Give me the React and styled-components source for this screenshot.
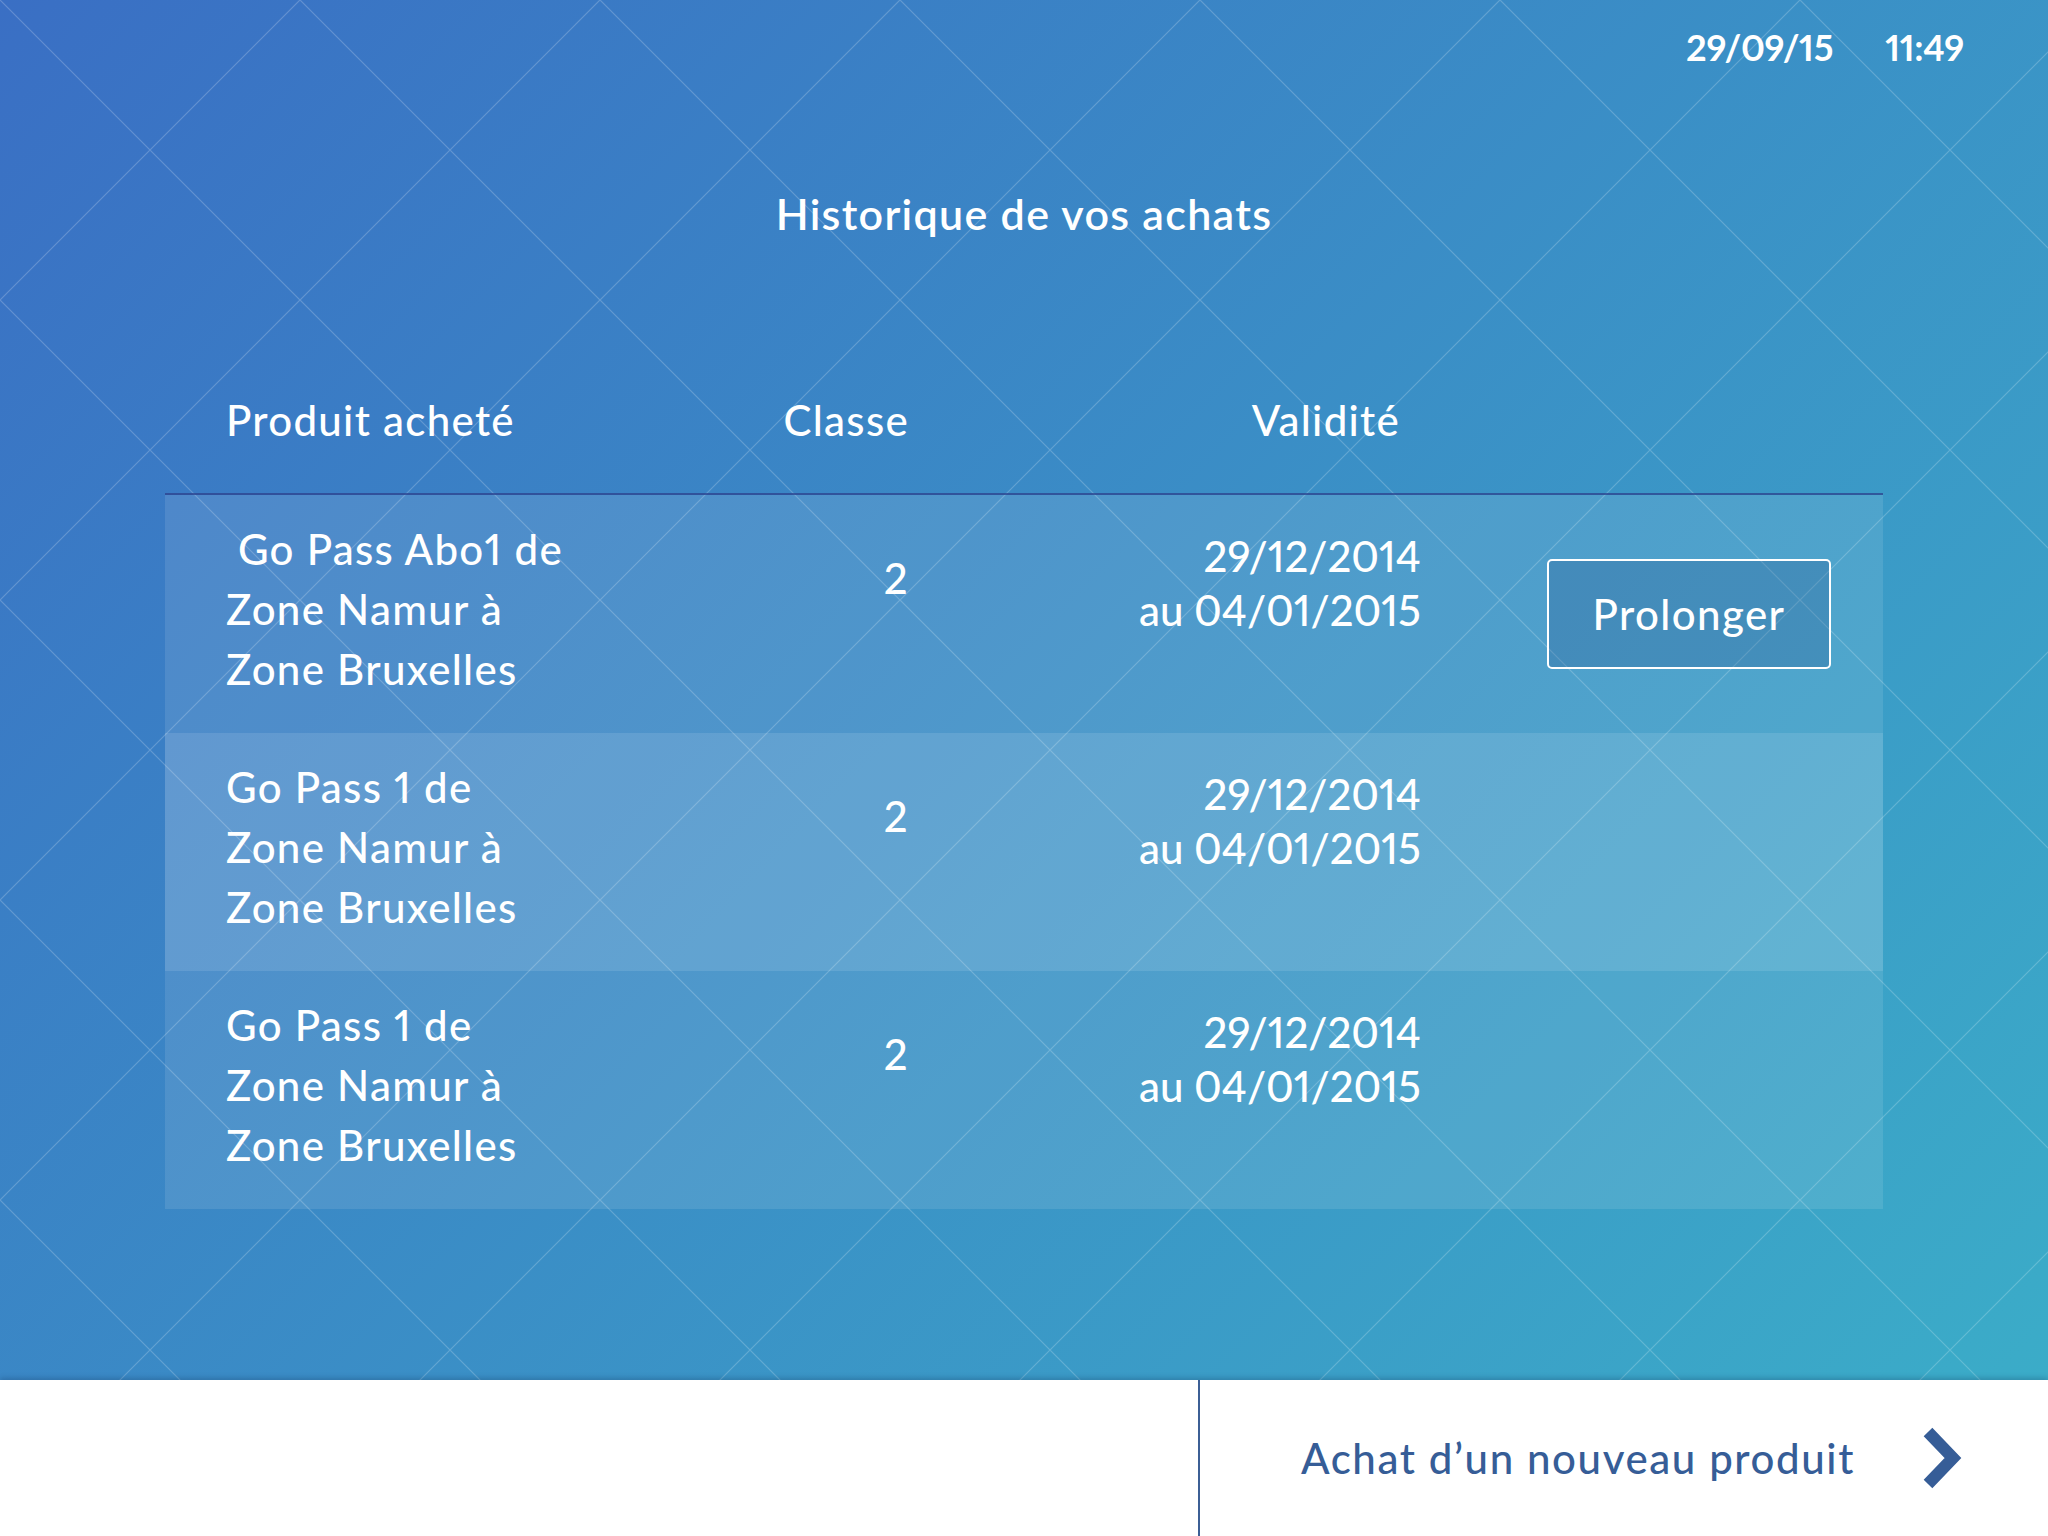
import React from "react";
import styled, { createGlobalStyle } from "styled-components";

const GlobalStyle = createGlobalStyle`
  html, body {
    margin: 0;
    padding: 0;
  }
  body {
    font-family: Lato, "Open Sans", sans-serif;
    color: #fff;
    font-variant-numeric: proportional-nums;
  }
`;

const Screen = styled.div`
  width: 2048px;
  height: 1536px;
  display: flex;
  flex-direction: column;
  overflow: hidden;
`;

const Stage = styled.main`
  position: relative;
  flex: 1;
  background: linear-gradient(134deg, #3a6fc4 0%, #3bacc8 100%);
`;

const Lattice = styled.svg`
  position: absolute;
  inset: 0;
  width: 100%;
  height: 100%;
  pointer-events: none;
`;

const Content = styled.div`
  position: relative;
  z-index: 1;
  display: flex;
  flex-direction: column;
`;

const TopBar = styled.div`
  display: flex;
  justify-content: flex-end;
  gap: 52px;
  padding: 22px 84px 0 0;
  font-size: 36px;
  font-weight: 700;
  line-height: 50px;
  letter-spacing: -0.3px;
`;

const Title = styled.h1`
  margin: 112px 0 0;
  font-size: 43px;
  font-weight: 600;
  line-height: 60px;
  letter-spacing: 1.3px;
  text-align: center;
`;

const Table = styled.section`
  margin: 146px 165px 0;
`;

const columns = "595px 149px 512px 1fr";

const HeaderRow = styled.div`
  display: grid;
  grid-template-columns: ${columns};
  padding-bottom: 43px;
  border-bottom: 2px solid rgba(45, 65, 140, 0.75);
  font-size: 42px;
  font-weight: 500;
  line-height: 60px;
  letter-spacing: 1.3px;
`;

const HeadCell = styled.div`
  text-align: ${(p) => p.$align || "left"};
  padding-left: ${(p) => p.$left || 0}px;
  padding-right: ${(p) => p.$right || 0}px;
`;

const Row = styled.div`
  display: grid;
  grid-template-columns: ${columns};
  height: 238px;
  background: rgba(255, 255, 255, ${(p) => p.$alpha});
  font-size: 42px;
  font-weight: 500;
  letter-spacing: 1.3px;
`;

const ProductCell = styled.div`
  padding: 24px 0 0 61px;
  line-height: 60px;
`;

const ClassCell = styled.div`
  padding-top: 53px;
  text-align: right;
  line-height: 60px;
`;

const DateCell = styled.div`
  padding-top: 34px;
  text-align: right;
  line-height: 54px;
  letter-spacing: 0;
`;

const ActionCell = styled.div`
  display: flex;
  justify-content: flex-end;
  align-items: flex-start;
  padding: 64px 52px 0 0;
`;

const ExtendButton = styled.button`
  box-sizing: border-box;
  width: 284px;
  height: 110px;
  border: 2px solid #fff;
  border-radius: 5px;
  background: rgba(40, 80, 140, 0.26);
  color: #fff;
  font-family: inherit;
  font-size: 42px;
  font-weight: 500;
  letter-spacing: 1.4px;
  cursor: pointer;
`;

const Footer = styled.footer`
  position: relative;
  z-index: 2;
  height: 156px;
  flex-shrink: 0;
  display: grid;
  grid-template-columns: 1200px 1fr;
  background: #fff;
  box-shadow: 0 -2px 5px rgba(10, 40, 80, 0.25);
`;

const FooterSpacer = styled.div`
  border-right: 2px solid #3c5f95;
`;

const NewPurchase = styled.a`
  display: flex;
  align-items: center;
  gap: 68px;
  padding-left: 101px;
  color: #365d97;
  font-size: 42px;
  font-weight: 500;
  letter-spacing: 1.6px;
  text-decoration: none;
  cursor: pointer;
`;

const purchases = [
  {
    lines: ["\u00a0Go Pass Abo1 de", "Zone Namur à", "Zone Bruxelles"],
    classe: "2",
    from: "29/12/2014",
    to: "au 04/01/2015",
    canExtend: true,
    alpha: 0.1,
  },
  {
    lines: ["Go Pass 1 de", "Zone Namur à", "Zone Bruxelles"],
    classe: "2",
    from: "29/12/2014",
    to: "au 04/01/2015",
    canExtend: false,
    alpha: 0.2,
  },
  {
    lines: ["Go Pass 1 de", "Zone Namur à", "Zone Bruxelles"],
    classe: "2",
    from: "29/12/2014",
    to: "au 04/01/2015",
    canExtend: false,
    alpha: 0.1,
  },
];

const Chevron = () => (
  <svg width="40" height="62" viewBox="0 0 40 62">
    <polyline
      points="5,5 30,31 5,57"
      fill="none"
      stroke="#365d97"
      strokeWidth="12"
      strokeLinecap="butt"
      strokeLinejoin="miter"
    />
  </svg>
);

const App = () => {
  return (
    <Screen>
      <GlobalStyle />
      <Stage>
        <Lattice>
          <defs>
            <pattern id="diamonds" width="300" height="300" patternUnits="userSpaceOnUse">
              <path
                d="M0 0 L300 300 M300 0 L0 300"
                stroke="rgba(255,255,255,0.2)"
                strokeWidth="1.2"
                fill="none"
              />
            </pattern>
          </defs>
          <rect width="100%" height="100%" fill="url(#diamonds)" />
        </Lattice>
        <Content>
          <TopBar>
            <span>29/09/15</span>
            <span>11:49</span>
          </TopBar>
          <Title>Historique de vos achats</Title>
          <Table>
            <HeaderRow>
              <HeadCell $left={61}>Produit acheté</HeadCell>
              <HeadCell $align="right">Classe</HeadCell>
              <HeadCell $align="right" $right={21}>Validité</HeadCell>
              <HeadCell />
            </HeaderRow>
            {purchases.map((p, i) => (
              <Row key={i} $alpha={p.alpha}>
                <ProductCell>
                  {p.lines.map((l) => (
                    <div key={l}>{l}</div>
                  ))}
                </ProductCell>
                <ClassCell>{p.classe}</ClassCell>
                <DateCell>
                  <div>{p.from}</div>
                  <div>{p.to}</div>
                </DateCell>
                <ActionCell>
                  {p.canExtend && <ExtendButton>Prolonger</ExtendButton>}
                </ActionCell>
              </Row>
            ))}
          </Table>
        </Content>
      </Stage>
      <Footer>
        <FooterSpacer />
        <NewPurchase>
          <span>Achat d’un nouveau produit</span>
          <Chevron />
        </NewPurchase>
      </Footer>
    </Screen>
  );
};

export default App;
